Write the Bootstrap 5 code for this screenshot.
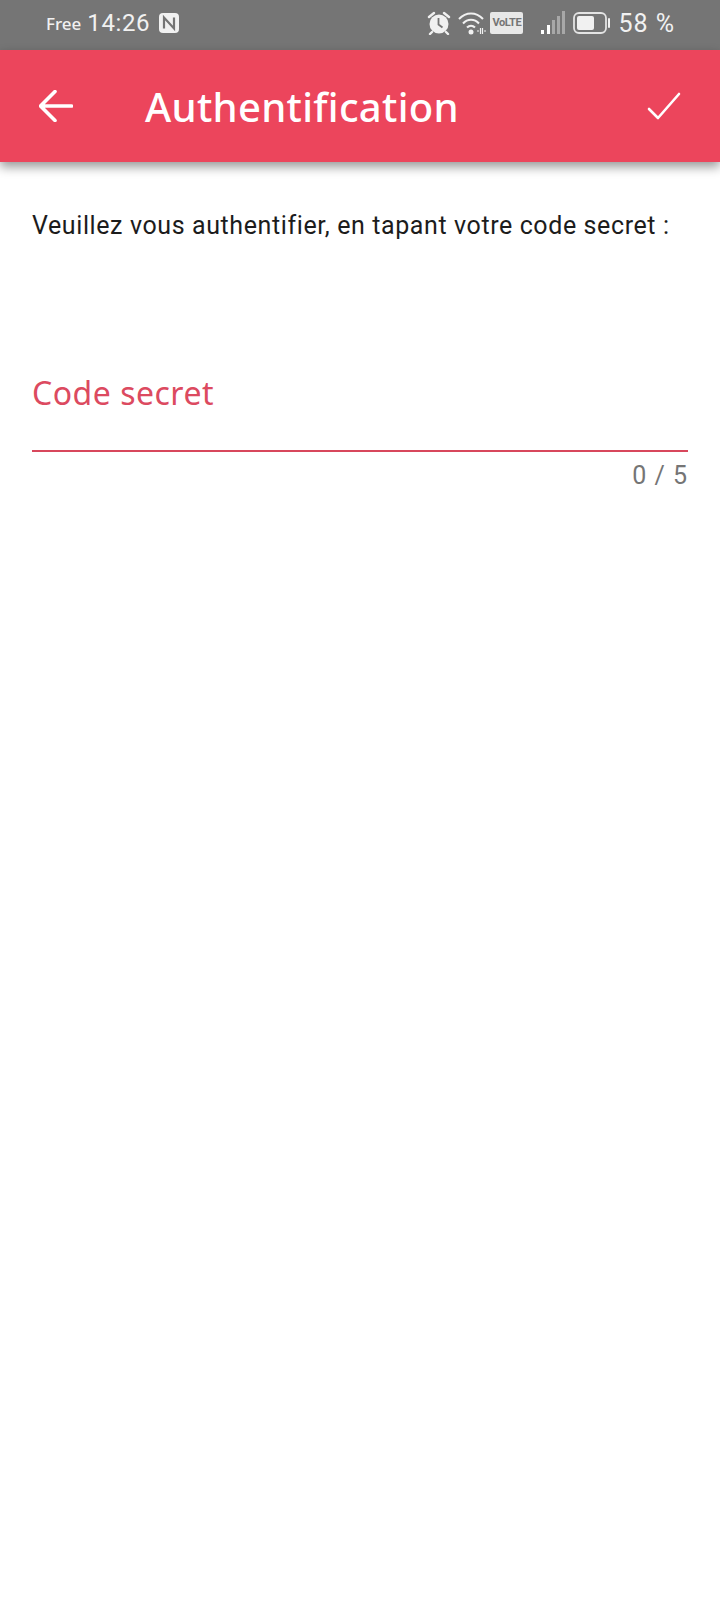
<!DOCTYPE html>
<html lang="fr">
<head>
  <meta charset="UTF-8">
  <meta name="viewport" content="width=device-width, initial-scale=1.0">
  <title>Authentification</title>
  <link rel="stylesheet" href="https://cdn.jsdelivr.net/npm/bootstrap@5.3.1/dist/css/bootstrap.min.css">
  <style>
    body {
      background: #fff;
      font-family: "Roboto", "Liberation Sans", sans-serif;
      width: 720px;
      height: 1600px;
      overflow: hidden;
    }
    .status-row {
      height: 50px;
      background: #757575;
      color: #f1f1f1;
      padding: 0 45px 4px 46px;
    }
    .carrier {
      font: 500 17px "Noto Sans", sans-serif;
      margin-right: 6px;
    }
    .clock {
      font: 400 24px "Roboto", sans-serif;
      letter-spacing: .6px;
      margin-right: 9px;
    }
    .percent {
      font: 400 25px "Roboto", sans-serif;
      letter-spacing: 1px;
      margin-left: 8px;
    }
    .alarm-icon {
      margin-right: 7px;
    }
    .volte {
      width: 33px;
      height: 22px;
      background: #e8e8e8;
      color: #757575;
      border-radius: 2px;
      font: 700 11px/22px "Roboto", sans-serif;
      text-align: center;
      letter-spacing: -.4px;
      margin-left: 4px;
      margin-right: 18px;
    }
    .app-bar {
      height: 112px;
      background: #ec455c;
      color: #fff;
      box-shadow: 0 5px 10px rgba(0, 0, 0, .4);
      padding: 0 39px;
    }
    .bar-title {
      font: 500 40px "Noto Sans", sans-serif;
      letter-spacing: .3px;
      margin: 0 0 0 72px;
    }
    .intro {
      font-size: 25px;
      letter-spacing: .6px;
      color: #1c1c1c;
      margin: 0;
      padding: 47px 32px 0;
      line-height: 33px;
    }
    .secret-field {
      margin: 130px 32px 0;
    }
    .secret-label {
      font: 400 32px/42px "Noto Sans", sans-serif;
      letter-spacing: .5px;
      color: #dc4a60;
      padding-bottom: 36px;
      border-bottom: 2px solid #d8475c;
    }
    .secret-count {
      font-size: 25px;
      color: #757575;
      text-align: right;
      letter-spacing: 1px;
      line-height: 33px;
      margin-top: 7px;
    }
  </style>
</head>
<body>
  <div class="status-row d-flex align-items-center">
    <span class="carrier">Free</span>
    <span class="clock">14:26</span>
    <svg width="20" height="20" viewBox="0 0 20 20"><rect width="20" height="20" rx="4" fill="#f1f1f1"/><path d="M5 15.500V4.500l10 11V4.500" fill="none" stroke="#757575" stroke-width="2.200"/></svg>
    <span class="ms-auto d-flex align-items-center">
      <svg width="24" height="24" viewBox="0 0 24 24" class="alarm-icon"><circle cx="12" cy="13" r="9.500" fill="#f1f1f1"/><path d="M2 6l5-4M22 6l-5-4M5 21l-2 2M19 21l2 2" stroke="#f1f1f1" stroke-width="2.400" stroke-linecap="round"/><path d="M11.500 7v6.500l4 3" fill="none" stroke="#757575" stroke-width="1.800"/></svg>
      <svg width="28" height="24" viewBox="0 0 28 24"><path d="M1 8c7-7.500 17-7.500 24 0M5 12.500c4.500-5 11.500-5 16 0M9 16.500c2.500-2.500 5.500-2.500 8 0" fill="none" stroke="#f1f1f1" stroke-width="2"/><circle cx="13" cy="21" r="2.500" fill="#f1f1f1"/><path d="M19 20h2M26 20h2M22.500 17v6M24.500 17v6" stroke="#f1f1f1" stroke-width="1.200"/></svg>
      <span class="volte">VoLTE</span>
      <svg width="24" height="24" viewBox="0 0 24 24"><rect x="0" y="19" width="3" height="4" fill="#fff"/><rect x="6" y="14" width="3" height="9" fill="#fff"/><rect x="11" y="9" width="3" height="14" fill="#a8a8a8"/><rect x="16" y="5" width="3" height="18" fill="#a8a8a8"/><rect x="21" y="0" width="3" height="23" fill="#a8a8a8"/></svg>
      <svg width="37" height="22" viewBox="0 0 37 22" class="ms-2"><rect x="1" y="1" width="32" height="20" rx="5" fill="none" stroke="#e4e4e4" stroke-width="1.800"/><rect x="4" y="4" width="17" height="14" rx="2" fill="#f1f1f1"/><rect x="35" y="6" width="2" height="10" rx="1" fill="#f1f1f1"/></svg>
      <span class="percent">58 %</span>
    </span>
  </div>

  <header class="app-bar d-flex align-items-center position-relative">
    <svg width="34" height="32" viewBox="0 0 34 32"><path d="M32.500 16H2M16 1.500L1.500 16 16 30.500" fill="none" stroke="#fff" stroke-width="3.600" stroke-linecap="round" stroke-linejoin="round"/></svg>
    <h1 class="bar-title">Authentification</h1>
    <svg class="ms-auto" width="34" height="28" viewBox="0 0 34 28"><path d="M2 17l9 9L32 2" fill="none" stroke="#fff" stroke-width="2.600" stroke-linecap="round" stroke-linejoin="round"/></svg>
  </header>

  <p class="intro">Veuillez vous authentifier, en tapant votre code secret :</p>

  <div class="secret-field">
    <div class="secret-label">Code secret</div>
    <div class="secret-count">0 / 5</div>
  </div>
</body>
</html>
